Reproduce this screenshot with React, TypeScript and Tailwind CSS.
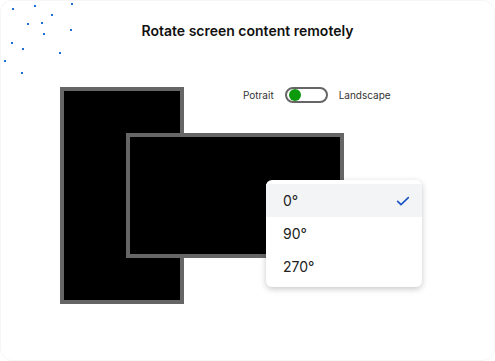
import React from "react";

const dots: [number, number][] = [
  [11, 7], [33, 4], [70, 2], [50, 13], [26, 22], [40, 21], [69, 28], [42, 32],
  [10, 41], [21, 47], [58, 51], [3, 59], [20, 71],
];

export default function App() {
  return (
    <div
      className="relative w-[495px] h-[361px] bg-white rounded-xl border border-[#f6f6f6] overflow-hidden"
      style={{ fontFamily: "Inter, 'Noto Sans', sans-serif" }}
    >
      {dots.map(([x, y], i) => (
        <span
          key={i}
          className="absolute w-[2px] h-[2px] bg-[#1f6fd8]"
          style={{ left: x, top: y }}
        />
      ))}

      <div className="flex justify-center pt-[20px]">
        <h1 className="text-[14px] leading-[20px] font-semibold text-[#111]">
          Rotate screen content remotely
        </h1>
      </div>

      <div className="flex items-center gap-[11px] pl-[242px] mt-[46px]">
        <span className="text-[10px] text-[#333] leading-[14px]">Potrait</span>
        <div className="w-[43px] h-[16px] rounded-full border-2 border-[#666] flex items-center pl-[2px]">
          <span className="w-[12px] h-[12px] rounded-full bg-[#0c9a0c]" />
        </div>
        <span className="text-[10px] text-[#333] leading-[14px]">Landscape</span>
      </div>

      {/* portrait screen */}
      <div className="absolute left-[59px] top-[86px] w-[124px] h-[217px] bg-black border-4 border-[#666]" />
      {/* landscape screen */}
      <div className="absolute left-[125px] top-[132px] w-[218px] h-[125px] bg-black border-4 border-[#666]" />

      {/* dropdown */}
      <div className="absolute left-[265px] top-[179px] w-[156px] bg-white rounded-md shadow-[0_2px_6px_rgba(0,0,0,0.22)] py-1">
        <div className="h-[33px] flex items-center justify-between pl-[17px] pr-[11px] bg-[#f3f4f6] text-[14px] text-[#222]">
          <span>0°</span>
          <svg width="16" height="16" viewBox="0 0 24 24" fill="none" stroke="#1c55c4" strokeWidth="2.5" strokeLinecap="round" strokeLinejoin="round">
            <path d="M4 12.5l5 5L20 7" />
          </svg>
        </div>
        <div className="h-[33px] flex items-center pl-[17px] text-[14px] text-[#222]">90°</div>
        <div className="h-[33px] flex items-center pl-[17px] text-[14px] text-[#222]">270°</div>
      </div>
    </div>
  );
}
